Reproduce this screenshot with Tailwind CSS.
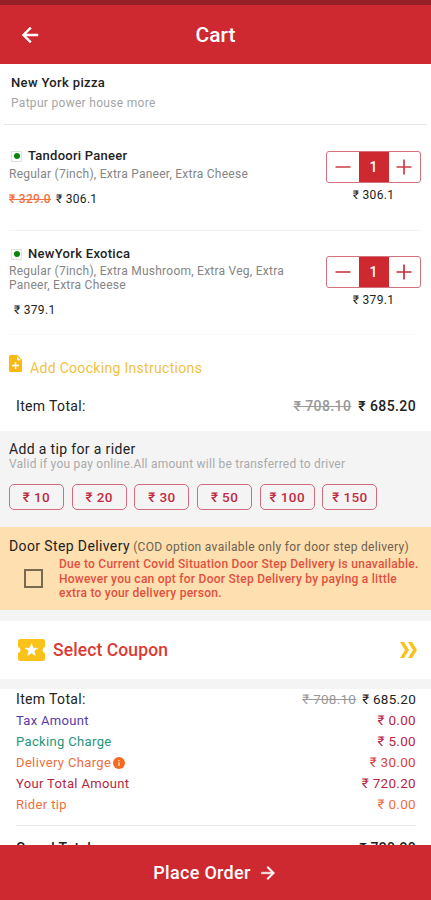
<!DOCTYPE html>
<html lang="en">
<head>
<meta charset="utf-8">
<title>Cart</title>
<script src="https://cdn.jsdelivr.net/npm/@tailwindcss/browser@4"></script>
</head>
<body class="bg-white font-['Roboto','Noto_Sans',sans-serif] text-[13px] text-[#222]">
<div class="flex h-[900px] w-[431px] flex-col overflow-hidden">
  <header class="flex h-16 shrink-0 items-center border-t-[5px] border-[#962028] bg-[#ce2831] text-white">
    <div class="w-20 pl-[18px]">
      <svg class="size-6" viewBox="0 0 24 24" fill="white" stroke="white" stroke-width=".5"><path d="M20 11H7.83l5.59-5.59L12 4l-8 8 8 8 1.41-1.41L7.83 13H20v-2z"/></svg>
    </div>
    <h1 class="flex-1 text-center text-[21px] font-medium leading-6">Cart</h1>
    <div class="w-20"></div>
  </header>

  <main class="flex min-h-0 flex-1 flex-col overflow-hidden">
    <section class="mx-1 h-[61px] shrink-0 border-b border-[#e6e6e6] pl-[7px] pt-[9px]">
      <h2 class="text-[13px] font-medium leading-5 tracking-[.35px]">New York pizza</h2>
      <p class="text-[12px] leading-[21px] tracking-[.3px] text-[#a5a5a5]">Patpur power house more</p>
    </section>

    <section class="mr-[10px] ml-[9px] flex h-[106px] shrink-0 justify-between border-b border-[#f3f3f3]">
      <div class="pt-[22px]">
        <div class="flex h-[18px] items-center gap-[6px]">
          <span class="ml-[2px] flex size-[11px] items-center justify-center border border-[#d5e8d5]"><i class="size-[6px] rounded-full bg-[#0a850a]"></i></span>
          <h3 class="text-[13px] font-medium tracking-[.25px]">Tandoori Paneer</h3>
        </div>
        <p class="text-[12px] leading-[18px] tracking-[.25px] text-[#858585]">Regular (7inch), Extra Paneer, Extra Cheese</p>
        <p class="mt-2 text-[12px] leading-4 tracking-[.3px]"><s class="font-medium text-[#f4703f]">₹ 329.0</s><span class="ml-[5px]">₹ 306.1</span></p>
      </div>
      <div class="flex w-[95px] flex-col items-center pt-[26px]">
        <div class="flex h-8 w-[95px] overflow-hidden rounded-[3px] border border-[#d4717c]">
          <button class="flex flex-1 items-center justify-center"><svg class="h-4 w-4" viewBox="0 0 16 16" stroke="#cc3d46" stroke-width="1.7"><path d="M0.500 8H15.500"/></svg></button>
          <span class="flex w-[30px] items-center justify-center bg-[#ce2831] text-[14px] font-medium text-white">1</span>
          <button class="flex flex-1 items-center justify-center"><svg class="h-4 w-4" viewBox="0 0 16 16" stroke="#cc3d46" stroke-width="1.7"><path d="M0.500 8H15.500M8 0.500V15.500"/></svg></button>
        </div>
        <p class="mt-1 text-[12px] leading-4 tracking-[.3px]">₹ 306.1</p>
      </div>
    </section>

    <section class="mr-[10px] ml-[9px] flex h-[104px] shrink-0 justify-between border-b border-[#fafafa]">
      <div class="pt-[14px]">
        <div class="flex h-[18px] items-center gap-[6px]">
          <span class="ml-[2px] flex size-[11px] items-center justify-center border border-[#d5e8d5]"><i class="size-[6px] rounded-full bg-[#0a850a]"></i></span>
          <h3 class="text-[13px] font-medium tracking-[.3px]">NewYork Exotica</h3>
        </div>
        <p class="pt-[1px] text-[12px] leading-[14px] tracking-[.25px] text-[#858585]">Regular (7inch), Extra Mushroom, Extra Veg, Extra<br>Paneer, Extra Cheese</p>
        <p class="mt-[10px] ml-[5px] text-[12px] leading-4 tracking-[.3px]">₹ 379.1</p>
      </div>
      <div class="flex w-[95px] flex-col items-center pt-[25px]">
        <div class="flex h-8 w-[95px] overflow-hidden rounded-[3px] border border-[#d4717c]">
          <button class="flex flex-1 items-center justify-center"><svg class="h-4 w-4" viewBox="0 0 16 16" stroke="#c0303a" stroke-width="1.7"><path d="M0.500 8H15.500"/></svg></button>
          <span class="flex w-[30px] items-center justify-center bg-[#ce2831] text-[14px] font-medium text-white">1</span>
          <button class="flex flex-1 items-center justify-center"><svg class="h-4 w-4" viewBox="0 0 16 16" stroke="#c0303a" stroke-width="1.7"><path d="M0.500 8H15.500M8 0.500V15.500"/></svg></button>
        </div>
        <p class="mt-[4px] text-[12px] leading-4 tracking-[.3px]">₹ 379.1</p>
      </div>
    </section>

    <section class="h-[96px] shrink-0 pt-[20px]">
      <div class="flex gap-2 pl-[9px]">
        <svg class="h-[17px] w-[13px]" viewBox="0 0 13 17"><path fill="#fbb714" d="M1.500 0H8.500L13 4.800V15.500Q13 17 11.500 17H1.500Q0 17 0 15.500V1.500Q0 0 1.500 0Z"/><path fill="#fff" d="M8 1.200V5.300H12zM5.700 7H7.300V9.700H10V11.300H7.300V14H5.700V11.300H3V9.700H5.700z"/></svg>
        <p class="pt-[3px] text-[14px] leading-5 tracking-[.31px] text-[#f3c13f]">Add Coocking Instructions</p>
      </div>
      <div class="mt-[17px] flex justify-between pr-[15px] pl-4 text-[14px] leading-[22px]">
        <span class="tracking-[.35px]">Item Total:</span>
        <span class="font-medium tracking-[.4px]"><s class="mr-[7px] text-[#999]">₹ 708.10</s>₹ 685.20</span>
      </div>
    </section>

    <section class="h-24 shrink-0 bg-[#f4f4f4] px-[9px] pt-[9px]">
      <h3 class="text-[14px] leading-[19px] tracking-[.35px]">Add a tip for a rider</h3>
      <p class="text-[12px] leading-[11px] tracking-[.23px] text-[#aaa]">Valid if you pay online.All amount will be transferred to driver</p>
      <div class="mt-[14px] flex gap-[7.7px] text-[13.5px] font-medium tracking-[.4px] text-[#c02c43]">
        <button class="h-[26px] w-[55px] rounded-[5px] border border-[#cf6c7d]">₹ 10</button>
        <button class="h-[26px] w-[55px] rounded-[5px] border border-[#cf6c7d]">₹ 20</button>
        <button class="h-[26px] w-[55px] rounded-[5px] border border-[#cf6c7d]">₹ 30</button>
        <button class="h-[26px] w-[55px] rounded-[5px] border border-[#cf6c7d]">₹ 50</button>
        <button class="h-[26px] w-[55px] rounded-[5px] border border-[#cf6c7d]">₹ 100</button>
        <button class="h-[26px] w-[55px] rounded-[5px] border border-[#cf6c7d]">₹ 150</button>
      </div>
    </section>

    <section class="h-[83px] shrink-0 bg-[#fddfb0] pt-[10px] pl-[9px]">
      <p class="whitespace-nowrap leading-[18px]"><span class="text-[14px] tracking-[.38px]">Door Step Delivery</span> <span class="text-[12px] tracking-[.32px] text-[#6d6250]">(COD option available only for door step delivery)</span></p>
      <div class="flex">
        <span class="mt-[13px] ml-[15px] size-[19px] shrink-0 border-2 border-[#79694f]"></span>
        <p class="ml-4 mt-px whitespace-nowrap text-[12px] font-medium leading-[14.500px] tracking-[.25px] text-[#e2503f]">Due to Current Covid Situation Door Step Delivery is unavailable.<br>However you can opt for Door Step Delivery by paying a little<br>extra to your delivery person.</p>
      </div>
    </section>

    <section class="flex h-[79px] shrink-0 items-center border-t-[11px] border-b-[10px] border-[#f4f4f4] pr-[14px] pl-[18px]">
      <svg class="h-[22px] w-[27px]" viewBox="0 0 27 22"><path fill="#fbc21b" d="M2.500 0H24.500Q27 0 27 2.500V8Q24.500 8.500 24.500 11T27 14V19.500Q27 22 24.500 22H2.500Q0 22 0 19.500V14Q2.500 13.500 2.500 11T0 8V2.500Q0 0 2.500 0Z"/><path fill="#fff" d="M13.500 4L15.300 8.700 20.300 9 16.400 12.100 17.700 17 13.500 14.200 9.300 17 10.600 12.100 6.700 9 11.700 8.700z"/></svg>
      <span class="ml-2 flex-1 pt-px text-[17.5px] font-medium tracking-[.1px] text-[#dd3a33]">Select Coupon</span>
      <svg class="h-[16px] w-[17px]" viewBox="0 0 17 16" fill="#fbc21b"><path d="M0 0H4L9 8 4 16H0L5 8zM8 0H12L17 8 12 16H8L13 8z"/></svg>
    </section>

    <section class="flex shrink-0 flex-col pr-[15px] pl-4 text-[13px] leading-[21px] tracking-[.3px]">
      <div class="flex justify-between"><span class="text-[14px] tracking-[.35px]">Item Total:</span><span class="text-[13.5px] tracking-[.25px]"><s class="mr-[6px] text-[#999]">₹ 708.10</s>₹ 685.20</span></div>
      <div class="flex justify-between"><span class="text-[#5a3aa6]">Tax Amount</span><span class="text-[13.5px] text-[#b92540]">₹ 0.00</span></div>
      <div class="flex justify-between"><span class="text-[#24967a] tracking-[.35px]">Packing Charge</span><span class="text-[13.5px] text-[#b92540]">₹ 5.00</span></div>
      <div class="flex justify-between"><span class="flex items-center gap-[2px] text-[#ec7040] tracking-[.35px]">Delivery Charge<svg class="size-3" viewBox="0 0 12 12"><circle cx="6" cy="6" r="6" fill="#f46a20"/><path d="M6 5.300V9M6 3V4.300" stroke="#ffd9c0" stroke-width="1.400"/></svg></span><span class="text-[13.5px] text-[#d8433d]">₹ 30.00</span></div>
      <div class="flex justify-between"><span class="text-[#b3283f] tracking-[.35px]">Your Total Amount</span><span class="text-[13.5px] text-[#b3283f]">₹ 720.20</span></div>
      <div class="flex justify-between"><span class="text-[#ec7040] tracking-[.35px]">Rider tip</span><span class="text-[13.5px] text-[#ec7040]">₹ 0.00</span></div>
      <div class="mt-[10px] flex justify-between border-t border-[#e8e8e8] pt-[12px] text-[14px] font-medium"><span>Grand Total:</span><span>₹ 720.20</span></div>
    </section>
  </main>

  <footer class="flex h-[55px] shrink-0 items-center justify-center gap-[7px] bg-[#ce2831] text-white">
    <span class="text-[18px] font-medium tracking-[.3px]">Place Order</span>
    <svg class="size-5" viewBox="0 0 24 24" fill="white" stroke="white" stroke-width=".5"><path d="M4 11h12.170l-5.590-5.590L12 4l8 8-8 8-1.410-1.410L16.170 13H4v-2z"/></svg>
  </footer>
</div>
</body>
</html>
